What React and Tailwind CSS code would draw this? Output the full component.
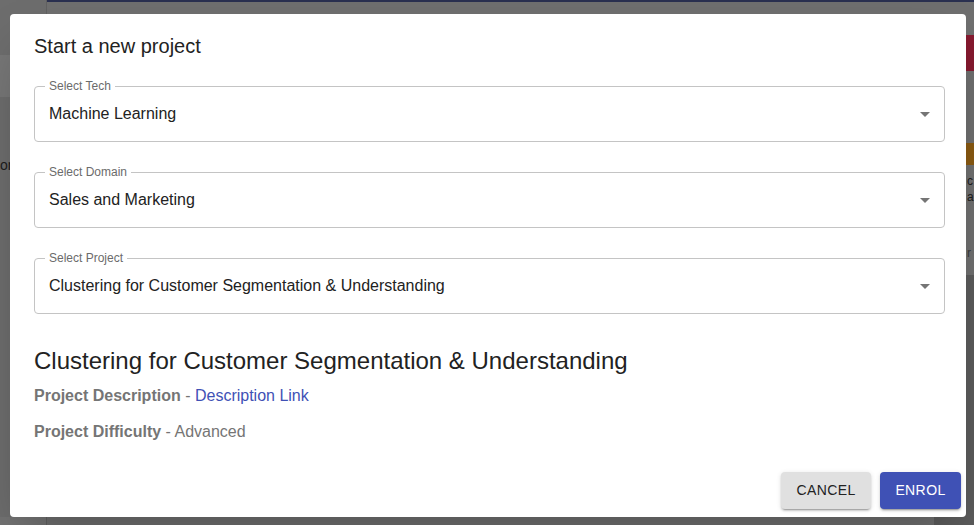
import React from 'react';

const fields = [
  { label: 'Select Tech', value: 'Machine Learning' },
  { label: 'Select Domain', value: 'Sales and Marketing' },
  { label: 'Select Project', value: 'Clustering for Customer Segmentation & Understanding' },
];

const ArrowDropDown = () => (
  <svg width="24" height="24" viewBox="0 0 24 24" className="fill-[#757575]">
    <path d="M7 10l5 5 5-5z" />
  </svg>
);

const SelectField = ({ label, value }) => (
  <div className="relative h-[56px] w-[911px] rounded border border-[#c4c4c4] flex items-center pl-[14px] pr-[7px]">
    <span className="absolute -top-[8px] left-[10px] bg-white px-[4px] text-[12px] leading-[14px] text-[#6b6b6b]">
      {label}
    </span>
    <span className="flex-1 text-[16px] text-[#222]">{value}</span>
    <ArrowDropDown />
  </div>
);

const App = () => {
  return (
    <div className="relative w-[974px] h-[525px] overflow-hidden flex bg-[#6f6f6f] font-['Liberation_Sans',Arial,sans-serif]">
      {/* dimmed page behind the dialog */}
      <aside className="w-[46px] flex flex-col bg-[#6d6d6d]">
        <div className="h-[55px]" />
        <div className="h-[42px] bg-[#777777]" />
        <div className="pt-[58px] text-[14px] leading-[20px] text-[#1c1c1c]">on</div>
        <div className="flex-1" />
        <div className="h-[8px] bg-[#737373]" />
      </aside>
      <main className="flex-1 flex flex-col border-l border-[#616161]">
        <div className="h-[2px] bg-[#2a3050]" />
        <div className="flex-1 flex justify-end bg-[#6f6f6f]">
          <div className="w-[40px] flex flex-col">
            <div className="h-[33px]" />
            <div className="h-[36px] bg-[#86192f]" />
            <div className="h-[72px]" />
            <div className="h-[22px] bg-[#8a5a12]" />
            <div className="h-[110px] bg-[#707070] pl-[33px] text-[12px] leading-[16px] text-[#1c1c1c]">
              <div className="pt-[8px]">c</div>
              <div>a</div>
              <div className="pt-[40px] text-[#3c3c3c]">r</div>
            </div>
            <div className="flex-1 bg-[#5c5c5c]" />
          </div>
        </div>
      </main>

      {/* dialog */}
      <div className="absolute left-[10px] top-[14px] w-[956px] h-[503px] rounded bg-white shadow-2xl flex flex-col">
        <h2 className="px-6 pt-4 text-[20px] leading-[32px] text-[#222]">Start a new project</h2>
        <div className="px-6 pt-6 flex flex-col gap-[30px]">
          {fields.map((f) => (
            <SelectField key={f.label} label={f.label} value={f.value} />
          ))}
        </div>
        <div className="px-6 pt-[31px]">
          <h3 className="text-[24px] leading-[32px] text-[#222]">
            Clustering for Customer Segmentation &amp; Understanding
          </h3>
          <p className="pt-[7px] text-[16px] leading-[24px] text-[#757575]">
            <span className="font-bold">Project Description</span> -{' '}
            <a className="text-[#3f51b5]">Description Link</a>
          </p>
          <p className="pt-[12px] text-[16px] leading-[24px] text-[#757575]">
            <span className="font-bold">Project Difficulty</span> - Advanced
          </p>
        </div>
        <div className="flex-1" />
        <div className="flex justify-end gap-[9px] pr-[5px] pb-[8px]">
          <button className="h-[37px] w-[90px] rounded bg-[#e0e0e0] text-[14px] tracking-[0.4px] text-[#222] shadow-[0_3px_1px_-2px_rgba(0,0,0,0.2),0_2px_2px_0_rgba(0,0,0,0.14),0_1px_5px_0_rgba(0,0,0,0.12)]">
            CANCEL
          </button>
          <button className="h-[37px] w-[81px] rounded bg-[#3f51b5] text-[14px] tracking-[0.4px] text-white shadow-[0_3px_1px_-2px_rgba(0,0,0,0.2),0_2px_2px_0_rgba(0,0,0,0.14),0_1px_5px_0_rgba(0,0,0,0.12)]">
            ENROL
          </button>
        </div>
      </div>
    </div>
  );
};

export default App;
